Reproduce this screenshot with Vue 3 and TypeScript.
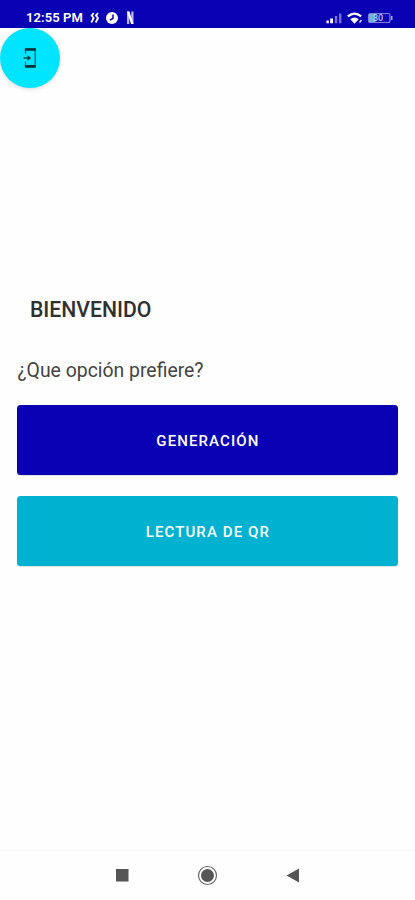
<script setup lang="ts">
interface Action {
  label: string
  kind: string
}

const actions: Action[] = [
  { label: 'GENERACIÓN', kind: 'primary' },
  { label: 'LECTURA DE QR', kind: 'secondary' },
]
</script>

<template>
  <div class="screen">
    <header class="status">
      <span class="clock">12:55 PM</span>
      <svg class="notices" width="46" height="14" viewBox="0 0 46 14">
        <path d="M4.700 2 2.700 4.500l2 2.500-2.400 4.500M9 2 7 4.500l2 2.500-2.400 4.500M1.700 4.500h2.500M6 4.500h2.500M3 8h2M7.500 8h2" fill="none" stroke="#fff" stroke-width="1.700" />
        <circle cx="23" cy="7" r="6" fill="#fff" />
        <path d="M24 3.500v4l-3.200 1.700" fill="none" stroke="#0a00b4" stroke-width="1.500" />
        <path d="M38 .5h2.300V13H38zM42.200.5h2.300V13h-2.300z" fill="#b9b4ee" />
        <path d="M38 .5h2.400L44.500 13h-2.400z" fill="#fff" />
      </svg>
      <svg class="signals" width="70" height="14" viewBox="0 0 70 14">
        <path d="M.5 9.500h2.300v2.800H.5zM4.200 7.500h2.800v4.800H4.200z" fill="#fff" />
        <path d="M8.800 5h2.400v7.300H8.800zM13 2.500h2.400v9.800H13z" fill="#7770d8" />
        <path d="M21.800 5.400Q28.500-.2 35.200 5.400" fill="none" stroke="#fff" stroke-width="2.200" />
        <path d="M24.300 8.200Q28.500 4.700 32.700 8.200L28.500 12.800z" fill="#fff" />
        <path d="m33.500 11.500 2-2.500" stroke="#d5d3f5" stroke-width="1.500" />
        <rect x="42.500" y="2.500" width="21.500" height="9" rx="2" fill="none" stroke="#827de0" stroke-width="1.200" />
        <rect x="43" y="3" width="6.500" height="8" fill="#68b6d8" />
        <text x="47" y="10.400" class="charge">30</text>
        <path d="M65 5h1.500v4H65z" fill="#aaa6ec" />
      </svg>
    </header>

    <button class="fab" aria-label="Salir">
      <svg width="16" height="22" viewBox="0 0 16 22">
        <path d="M3.500 7V1.800h9.700v18.400H3.500V15" fill="none" stroke="#12555e" stroke-width="1.200" />
        <path d="M2.900 1.200h10.900v2.600H2.900zM2.900 18h10.900v2.600H2.900z" fill="#07343b" />
        <path d="M1.500 11h6" stroke="#124c55" stroke-width="1.500" />
        <path d="m5.500 8.200 3.700 2.800-3.700 2.800z" fill="#123c43" />
      </svg>
    </button>

    <main class="content">
      <h1>BIENVENIDO</h1>
      <p>¿Que opción prefiere?</p>
      <button v-for="action in actions" :key="action.label" class="action" :class="action.kind">{{ action.label }}</button>
    </main>

    <nav class="system">
      <svg width="415" height="48" viewBox="0 0 415 48">
        <rect x="116" y="18" width="12.500" height="12.500" fill="#555" />
        <circle cx="207.500" cy="24.500" r="9" fill="none" stroke="#666" stroke-width="1.200" />
        <circle cx="207.500" cy="24.500" r="6.500" fill="#555" />
        <path d="M299 17.500v14l-12.500-7z" fill="#555" />
      </svg>
    </nav>
  </div>
</template>

<style>
body { background: #fefefe; }
</style>

<style scoped>
.screen {
  width: 415px;
  height: 900px;
  display: flex;
  flex-direction: column;
  background: #fefefe;
  font-family: Roboto, sans-serif;
  overflow: hidden;
}
.status {
  height: 28px;
  flex: none;
  display: flex;
  align-items: center;
  box-sizing: border-box;
  padding: 8px 19px 0 26px;
  background: #0a00b4;
  color: #fff;
}
.clock {
  width: 63px;
  font: 600 13px/18px Roboto, sans-serif;
  letter-spacing: 0.1px;
  white-space: nowrap;
}
.signals { margin-left: auto; }
.charge {
  fill: #c4c8f4;
  font: 500 9px Roboto, sans-serif;
}
button {
  border: 0;
  padding: 0;
  font-family: inherit;
}
.fab {
  width: 60px;
  height: 60px;
  flex: none;
  display: flex;
  align-items: center;
  justify-content: center;
  border-radius: 50%;
  background: #00e5ff;
  box-shadow: 0 1px 4px rgba(0, 0, 0, 0.16);
}
.content {
  flex: 1;
  display: flex;
  flex-direction: column;
  padding: 208px 16.600px 0 17.400px;
}
h1 {
  margin: 0 0 33px 12.600px;
  font-size: 21.200px;
  line-height: 28px;
  font-weight: 500;
  color: #303030;
}
p {
  margin: 0 0 20px;
  font-size: 19.400px;
  line-height: 28px;
  color: #444;
}
.action {
  height: 70px;
  margin-bottom: 21px;
  padding-top: 2px;
  border-radius: 3.500px;
  color: #fff;
  font-size: 15px;
  font-weight: 500;
  letter-spacing: 1.100px;
  box-shadow: 0 1px 1px rgba(0, 0, 0, 0.12);
}
.primary { background: #0a00b4; }
.secondary { background: #00b2d0; }
.system {
  height: 49px;
  flex: none;
  border-top: 1px solid #f7f7f7;
}
</style>
